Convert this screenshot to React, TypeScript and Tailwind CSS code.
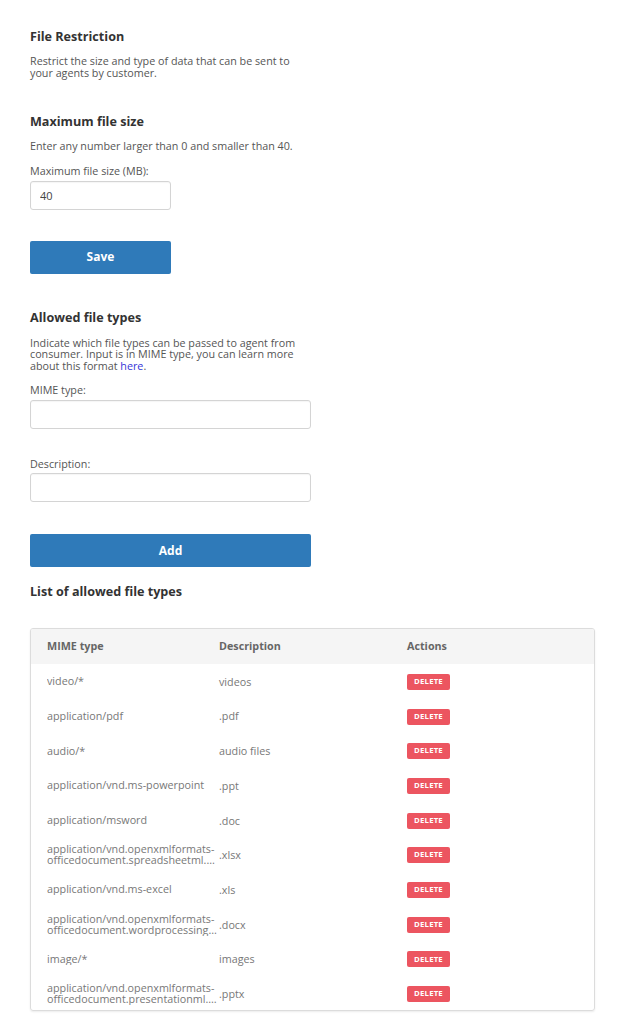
import React from "react";

const fileTypes = [
  { mime: ["video/*"], desc: "videos" },
  { mime: ["application/pdf"], desc: ".pdf" },
  { mime: ["audio/*"], desc: "audio files" },
  { mime: ["application/vnd.ms-powerpoint"], desc: ".ppt" },
  { mime: ["application/msword"], desc: ".doc" },
  { mime: ["application/vnd.openxmlformats-", "officedocument.spreadsheetml.sheet"], desc: ".xlsx" },
  { mime: ["application/vnd.ms-excel"], desc: ".xls" },
  { mime: ["application/vnd.openxmlformats-", "officedocument.wordprocessingml.document"], desc: ".docx" },
  { mime: ["image/*"], desc: "images" },
  { mime: ["application/vnd.openxmlformats-", "officedocument.presentationml.presentation"], desc: ".pptx" },
];

const Heading = ({ children, className = "" }: { children: React.ReactNode; className?: string }) => (
  <h2 className={`text-[12.6px] leading-[16px] font-bold text-[#333] ${className}`}>{children}</h2>
);

const Text = ({ children, className = "" }: { children: React.ReactNode; className?: string }) => (
  <p className={`text-[10.75px] leading-[11.5px] text-[#555] ${className}`}>{children}</p>
);

const Input = ({ value, className = "" }: { value?: string; className?: string }) => (
  <input
    defaultValue={value}
    className={`block h-[29px] rounded-[3px] border border-[#d4d4d4] bg-white px-[9px] text-[11px] text-[#444] shadow-[inset_0_1px_1px_rgba(0,0,0,0.04)] outline-none ${className}`}
  />
);

const Button = ({ children, className = "" }: { children: React.ReactNode; className?: string }) => (
  <button className={`block h-[33px] rounded-[2px] bg-[#2f7ab9] text-[12px] font-bold text-white ${className}`}>
    {children}
  </button>
);

export default function App() {
  return (
    <div className="min-h-[1031px] bg-white pl-[30px] pt-[29px] font-['Open_Sans',sans-serif]">
      <Heading>File Restriction</Heading>
      <Text className="mt-[11px] w-[280px]">
        Restrict the size and type of data that can be sent to your agents by customer.
      </Text>

      <Heading className="mt-[35px]">Maximum file size</Heading>
      <Text className="mt-[11px]">Enter any number larger than 0 and smaller than 40.</Text>
      <Text className="mt-[13.5px]">Maximum file size (MB):</Text>
      <Input value="40" className="mt-[3px] w-[141px]" />
      <Button className="mt-[31px] w-[141px]">Save</Button>

      <Heading className="mt-[36px]">Allowed file types</Heading>
      <Text className="mt-[12px] w-[284px]">
        Indicate which file types can be passed to agent from consumer. Input is in MIME type, you can learn more
        about this format <a className="text-[#3535d8]">here</a>.
      </Text>
      <Text className="mt-[13px]">MIME type:</Text>
      <Input className="mt-[3px] w-[281px]" />
      <Text className="mt-[30px]">Description:</Text>
      <Input className="mt-[3px] w-[281px]" />
      <Button className="mt-[32px] w-[281px]">Add</Button>

      <Heading className="mt-[16.5px]">List of allowed file types</Heading>

      <div className="mt-[28px] w-[565px] overflow-hidden rounded-[3px] border border-[#dcdcdc] shadow-[0_1px_2px_rgba(0,0,0,0.08)]">
        <div className="grid h-[35px] grid-cols-[172px_188px_1fr] items-center bg-[#f5f5f5] pl-[16px] text-[10.75px] font-bold text-[#666]">
          <span>MIME type</span>
          <span>Description</span>
          <span>Actions</span>
        </div>
        {fileTypes.map((t) => (
          <div
            key={t.desc}
            className="grid h-[34.7px] grid-cols-[172px_188px_1fr] items-center pl-[16px] pt-[2px] text-[10.75px] text-[#777]"
          >
            <span className="flex min-w-0 flex-col pr-[2px] leading-[11px]">
              {t.mime.map((line) => (
                <span key={line} className="truncate">
                  {line}
                </span>
              ))}
            </span>
            <span>{t.desc}</span>
            <span>
              <button className="flex h-[16px] w-[43px] items-center justify-center rounded-[2px] bg-[#ec5560] text-[7.75px] font-bold tracking-[0.2px] text-white">
                DELETE
              </button>
            </span>
          </div>
        ))}
      </div>
    </div>
  );
}
